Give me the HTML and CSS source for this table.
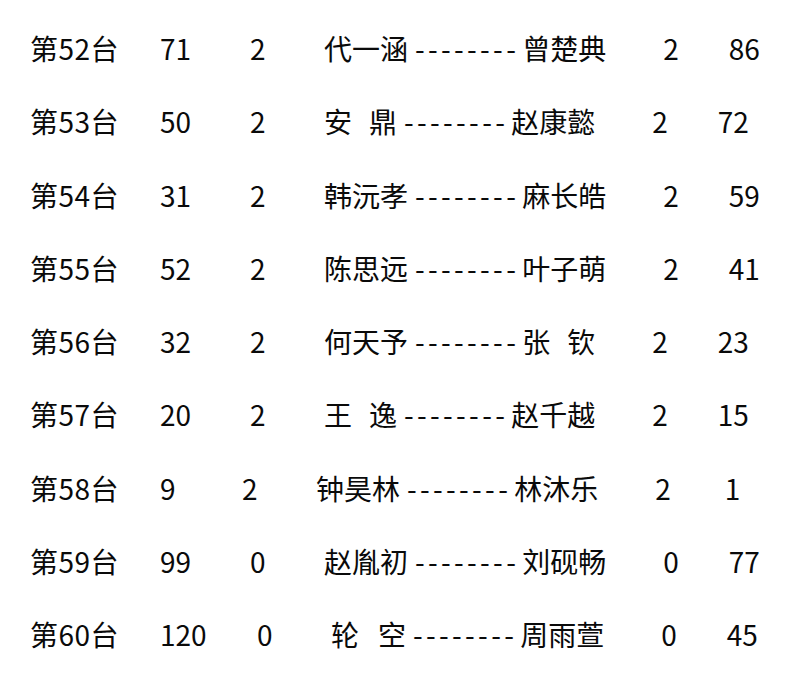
FILE: index.html
```html
<!DOCTYPE html>
<html lang="zh-CN">
<head>
<meta charset="utf-8">
<title>对阵表</title>
<link rel="stylesheet" href="styles.css">
</head>
<body>
<div class="list">
  <div class="row"><span class="label">第52台</span><span class="n1">71</span><span class="n2">2</span><span class="name">代一涵</span><span class="dash">--------</span><span class="name p2">曾楚典</span><span class="s2">2</span><span class="t2">86</span></div>
  <div class="row"><span class="label">第53台</span><span class="n1">50</span><span class="n2">2</span><span class="name">安<span class="sp"></span>鼎</span><span class="dash">--------</span><span class="name p2">赵康懿</span><span class="s2">2</span><span class="t2">72</span></div>
  <div class="row"><span class="label">第54台</span><span class="n1">31</span><span class="n2">2</span><span class="name">韩沅孝</span><span class="dash">--------</span><span class="name p2">麻长皓</span><span class="s2">2</span><span class="t2">59</span></div>
  <div class="row"><span class="label">第55台</span><span class="n1">52</span><span class="n2">2</span><span class="name">陈思远</span><span class="dash">--------</span><span class="name p2">叶子萌</span><span class="s2">2</span><span class="t2">41</span></div>
  <div class="row"><span class="label">第56台</span><span class="n1">32</span><span class="n2">2</span><span class="name">何天予</span><span class="dash">--------</span><span class="name p2">张<span class="sp"></span>钦</span><span class="s2">2</span><span class="t2">23</span></div>
  <div class="row"><span class="label">第57台</span><span class="n1">20</span><span class="n2">2</span><span class="name">王<span class="sp"></span>逸</span><span class="dash">--------</span><span class="name p2">赵千越</span><span class="s2">2</span><span class="t2">15</span></div>
  <div class="row"><span class="label">第58台</span><span class="n1 one">9</span><span class="n2">2</span><span class="name">钟昊林</span><span class="dash">--------</span><span class="name p2">林沐乐</span><span class="s2">2</span><span class="t2 one">1</span></div>
  <div class="row"><span class="label">第59台</span><span class="n1">99</span><span class="n2">0</span><span class="name">赵胤初</span><span class="dash">--------</span><span class="name p2">刘砚畅</span><span class="s2">0</span><span class="t2">77</span></div>
  <div class="row"><span class="label">第60台</span><span class="n1 three">120</span><span class="n2">0</span><span class="name">轮<span class="sp wide"></span>空</span><span class="dash">--------</span><span class="name p2">周雨萱</span><span class="s2">0</span><span class="t2">45</span></div>
</div>
</body>
</html>
```
FILE: styles.css
```css
html, body {
  margin: 0;
  padding: 0;
  background: #ffffff;
}

body {
  font-family: "Noto Sans CJK SC", "Noto Sans", sans-serif;
  font-size: 28px;
  color: #0a0a0a;
}

.list {
  padding-top: 12px;
}

.row {
  display: flex;
  align-items: baseline;
  height: 73.25px;
  line-height: 73.25px;
  white-space: nowrap;
}

.label {
  box-sizing: border-box;
  width: 160px;
  padding-left: 30px;
  letter-spacing: 0.5px;
}

.n1 {
  width: 90px;
}

.n1.one {
  width: 82px;
}

.n1.three {
  width: 97px;
}

.n2 {
  width: 74px;
}

.name {
  display: inline-flex;
}

.sp {
  display: inline-block;
  width: 17px;
}

.sp.wide {
  width: 19px;
}

.dash {
  margin-left: 7px;
  letter-spacing: 3.3px;
}

.p2 {
  margin-left: 3px;
}

.s2 {
  margin-left: 57px;
}

.t2 {
  margin-left: 50px;
}

.t2.one {
  margin-left: 54px;
}
```
